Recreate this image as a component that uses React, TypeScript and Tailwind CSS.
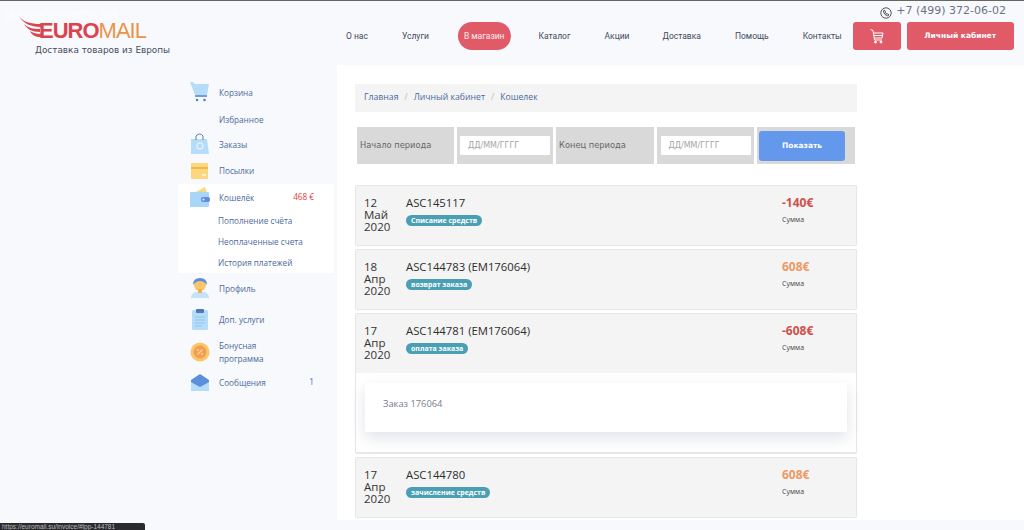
import React from "react";

const dv = "font-['DejaVu_Sans',sans-serif]";
const os = "font-['Open_Sans',sans-serif]";

function Logo() {
  return (
    <div className="relative w-[150px] h-[29px] ml-[18px]">
      <svg className="absolute left-0 top-0" width="30" height="28" viewBox="0 0 30 28">
        <path d="M1 1 C5 7 12 9 23 9 L23 12 C12 12 5 8 1 1Z" fill="#d9444e" />
        <path d="M6 9 C10 13 15 14 22 14 L22 17 C14 17 9 14 6 9Z" fill="#d9444e" />
        <path d="M12 16 C15 18 18 19 23 19 L23 22 C17 22 14 20 12 16Z" fill="#d9444e" />
      </svg>
      <div className="absolute left-[21px] top-[4px] flex items-baseline text-[22px] leading-[24px] tracking-[-1px] font-['Liberation_Sans',sans-serif]">
        <span className="font-bold text-[#d9444e]">EURO</span>
        <span className="text-[#e8954a]">MAIL</span>
      </div>
    </div>
  );
}

function NavLink({ children, active }: { children: React.ReactNode; active?: boolean }) {
  return active ? (
    <span className="h-[28px] px-[6px] flex items-center rounded-[14px] bg-[#e05a68] text-white/90">{children}</span>
  ) : (
    <span className="text-[#3f4a5c]">{children}</span>
  );
}

function CartIcon({ color = "#fff", size = 16 }: { color?: string; size?: number }) {
  return (
    <svg width={size} height={size} viewBox="0 0 16 16" fill="none" stroke={color} strokeWidth="1">
      <path d="M1.5 1.5 L4 2.5 L5.5 12 H13" />
      <path d="M4.5 5 H14 L13 10 H5.2" />
      <path d="M5 7.5 H13.5" />
      <circle cx="6.5" cy="14" r="1" fill={color} />
      <circle cx="12" cy="14" r="1" fill={color} />
    </svg>
  );
}

const I = ({ children }: { children: React.ReactNode }) => (
  <svg width="20" height="22" viewBox="0 0 20 22" className="shrink-0">{children}</svg>
);

const icons: Record<string, React.ReactNode> = {
  cart: (
    <I>
      <path d="M0 1 H3 L5 3 H19 L17 14 H5Z" fill="#b5dcf8" />
      <path d="M5 14 H17 V16 H5Z" fill="#6d9fdc" />
      <circle cx="7" cy="19" r="1.3" fill="#5a7fb5" />
      <circle cx="14.5" cy="19" r="1.3" fill="#5a7fb5" />
    </I>
  ),
  bag: (
    <I>
      <path d="M1 6 H17 L19 21 H1Z" fill="#b5dcf8" />
      <path d="M6 7 V3 Q10 -1 13 3 V7" fill="none" stroke="#5f7fa8" strokeWidth="1" />
      <circle cx="10" cy="13" r="3" fill="none" stroke="#e2f2fd" strokeWidth="1.3" />
    </I>
  ),
  box: (
    <I>
      <rect x="1" y="3" width="17" height="16" rx="1" fill="#fcd77f" />
      <rect x="1" y="7" width="17" height="2" fill="#f0b74f" />
      <rect x="12" y="14" width="4" height="2" fill="#fff3cf" />
    </I>
  ),
  wallet: (
    <I>
      <path d="M2 8 L15 1 L17 7Z" fill="#fcd77f" />
      <rect x="0" y="6" width="19" height="15" rx="1" fill="#a9d5f7" />
      <rect x="11" y="11" width="9" height="5" rx="2" fill="#5f8fdc" />
      <circle cx="13.5" cy="13.5" r="1" fill="#e2f2fd" />
    </I>
  ),
  user: (
    <I>
      <path d="M1 21 Q1 16 6 15 H14 Q19 16 19 21Z" fill="#c4e3f9" />
      <circle cx="10" cy="8" r="6" fill="#fbc56b" />
      <path d="M3 8 Q3 1 10 1 Q17 1 17 8 Q14 4 10 4 Q6 4 3 8Z" fill="#5b8fdb" />
      <rect x="8" y="12" width="4" height="4" fill="#f5ad4f" />
    </I>
  ),
  clip: (
    <I>
      <rect x="2" y="2" width="16" height="20" rx="1.5" fill="#b5dcf8" />
      <rect x="6" y="1" width="8" height="4" rx="1" fill="#4f78b8" />
      <path d="M5 9 H15 M5 12 H15 M5 15 H15 M5 18 H12" stroke="#93c4ec" strokeWidth="1" />
    </I>
  ),
  coin: (
    <I>
      <circle cx="10" cy="11" r="9.5" fill="#fbc56b" />
      <circle cx="10" cy="11" r="6.5" fill="#ef9f4f" />
      <path d="M7.5 13.5 L12.5 8.5" stroke="#fbd79a" strokeWidth="1.2" />
      <circle cx="8" cy="9" r="1" fill="#fbd79a" />
      <circle cx="12" cy="13" r="1" fill="#fbd79a" />
    </I>
  ),
  mail: (
    <I>
      <path d="M1 9 L10 3 L19 9 V19 H1Z" fill="#5b8fdb" />
      <path d="M1 11 L10 16 L19 11 V20 H1Z" fill="#b5dcf8" />
    </I>
  ),
};

function SideItem({
  icon,
  label,
  right,
  rightClass,
  className,
}: {
  icon?: string;
  label: React.ReactNode;
  right?: string;
  rightClass?: string;
  className?: string;
}) {
  return (
    <div className={`flex items-center pl-[12px] ${className ?? ""}`}>
      <div className="w-[29px] shrink-0 flex justify-start">{icon ? icons[icon] : null}</div>
      <div className="flex-1 text-[#4a6a9c] leading-[13px]">{label}</div>
      {right ? <div className={`mr-[20px] ${rightClass}`}>{right}</div> : null}
    </div>
  );
}

function Sidebar() {
  return (
    <aside className={`w-[156px] shrink-0 pt-[15px] text-[8.2px] ${os}`}>
      <SideItem icon="cart" label="Корзина" className="h-[24px]" />
      <SideItem label="Избранное" className="h-[28px] mt-[1px]" />
      <SideItem icon="bag" label="Заказы" className="h-[22px]" />
      <SideItem icon="box" label="Посылки" className="h-[27px] mt-[2px]" />
      <div className="bg-white h-[89px] pt-[1px]">
        <SideItem icon="wallet" label="Кошелёк" right="468 €" rightClass="text-[#e2403c]" className="h-[24px]" />
        <div className="pl-[40px] pt-[1px] text-[#4a6a9c]">
          <div className="h-[22px] flex items-center">Пополнение счёта</div>
          <div className="h-[21px] flex items-center">Неоплаченные счета</div>
          <div className="h-[20px] flex items-center">История платежей</div>
        </div>
      </div>
      <SideItem icon="user" label="Профиль" className="h-[30px]" />
      <SideItem icon="clip" label="Доп. услуги" className="h-[32px]" />
      <SideItem icon="coin" label={<>Бонусная<br />программа</>} className="h-[33px]" />
      <SideItem icon="mail" label="Сообщения" right="1" rightClass="text-[#4a6a9c]" className="h-[28px]" />
    </aside>
  );
}

function Txn({
  d, m, id, tag, amt, neg, children,
}: {
  d: string; m: string; id: string; tag: string; amt: string; neg?: boolean; children?: React.ReactNode;
}) {
  return (
    <div className="mb-[4px] rounded-[2px] border-x border-t border-[#e6e6e6] bg-white shadow-[0_1px_1px_rgba(0,0,0,0.1)]">
      <div className="h-[59px] bg-[#f4f4f4] flex pl-[8px] pt-[11px]">
        <div className="w-[42px] shrink-0 text-[11.5px] leading-[12px] text-[#333]">
          <div>{d}</div>
          <div>{m}</div>
          <div>2020</div>
        </div>
        <div className="flex-1 -mt-[1px]">
          <div className="text-[11.3px] leading-[13px] text-[#2d2d2d]">{id}</div>
          <div className="mt-[6px] block w-fit rounded-[6px] h-[11px] px-[5px] bg-[#4a9fb5] text-white text-[7px] leading-[11px] font-bold">
            {tag}
          </div>
        </div>
        <div className="w-[74px] shrink-0 -mt-[1px]">
          <div className={`text-[12px] leading-[13px] font-bold ${neg ? "text-[#d2504c]" : "text-[#ec9a66]"}`}>{amt}</div>
          <div className="mt-[6px] text-[7px] leading-[10px] text-[#444]">Сумма</div>
        </div>
      </div>
      {children}
    </div>
  );
}

export default function App() {
  return (
    <div className={`relative h-[530px] w-[1024px] overflow-hidden bg-[#f8f9fc] border-t border-[#666] ${dv}`}>
      <div className="absolute left-[4px] top-[3px] text-[13px] text-white/70 font-['Liberation_Sans',sans-serif]">pravovoi-vopros.net</div>

      <header className="h-[64px] flex">
        <div className="w-[323px] shrink-0 pt-[14px]">
          <Logo />
          <div className="ml-[35px] text-[8.9px] leading-[12px] text-[#444c5c]">Доставка товаров из Европы</div>
        </div>
        <div className="flex-1 flex flex-col">
          <div className="h-[21px] flex items-center justify-end pr-[18px] text-[11px] text-[#6c7285]">
            <svg className="mr-[4px] mt-[3px]" width="12" height="12" viewBox="0 0 12 12" fill="none" stroke="#444" strokeWidth="0.9">
              <circle cx="6" cy="6" r="5.2" />
              <path d="M4 3 L3.5 5 Q4.5 8 7.5 8.8 L9 8 L7.8 6.8 L7 7.2 Q5.5 6.5 5 5 L5.5 4.3Z" />
            </svg>
            +7 (499) 372-06-02
          </div>
          <div className="flex items-center h-[28px] text-[8.5px] font-['Roboto',sans-serif]">
            <div className="ml-[23px]"><NavLink>О нас</NavLink></div>
            <div className="ml-[34px]"><NavLink>Услуги</NavLink></div>
            <div className="ml-[29px]"><NavLink active>В магазин</NavLink></div>
            <div className="ml-[28px]"><NavLink>Каталог</NavLink></div>
            <div className="ml-[34px]"><NavLink>Акции</NavLink></div>
            <div className="ml-[33px]"><NavLink>Доставка</NavLink></div>
            <div className="ml-[34px]"><NavLink>Помощь</NavLink></div>
            <div className="ml-[34px]"><NavLink>Контакты</NavLink></div>
            <div className="ml-[11px] h-[28px] w-[48px] rounded-[3px] bg-[#e05a68] flex items-center justify-center"><CartIcon /></div>
            <div className={`ml-[6px] h-[28px] w-[107px] rounded-[3px] bg-[#e05a68] flex items-center justify-center text-white text-[7.5px] font-bold ${dv}`}>Личный кабинет</div>
          </div>
        </div>
      </header>

      <div className="flex h-[455px]">
        <div className="w-[178px] shrink-0" />
        <Sidebar />
        <main className={`ml-[3px] flex-1 bg-white pl-[18px] pt-[19px] ${os}`}>
          <div className="w-[502px]">
            <nav className="h-[28px] bg-[#f4f4f4] flex items-center pl-[9px] text-[8.7px] text-[#4a6a9c]">
              <span>Главная</span>
              <span className="mx-[6px] text-[#bbb]">/</span>
              <span>Личный кабинет</span>
              <span className="mx-[6px] text-[#bbb]">/</span>
              <span>Кошелек</span>
            </nav>
            <div className={`mt-[15px] ml-[2px] h-[37px] flex gap-[3px] text-[8.3px] text-[#666] ${dv}`}>
              <div className="w-[97px] bg-[#d9d9d9] flex items-center pl-[3px]">Начало периода</div>
              <div className="w-[96px] bg-[#d9d9d9] flex items-center justify-center">
                <div className="w-[90px] h-[19px] bg-white rounded-[1px] pl-[8px] flex items-center text-[#a5a5a5] text-[8px]">ДД/ММ/ГГГГ</div>
              </div>
              <div className="w-[98px] bg-[#d9d9d9] flex items-center pl-[3px]">Конец периода</div>
              <div className="w-[97px] bg-[#d9d9d9] flex items-center justify-center">
                <div className="w-[90px] h-[19px] bg-white rounded-[1px] pl-[8px] flex items-center text-[#a5a5a5] text-[8px]">ДД/ММ/ГГГГ</div>
              </div>
              <div className="w-[98px] bg-[#d9d9d9] flex items-center pl-[2px]">
                <div className="w-[86px] h-[30px] rounded-[3px] bg-[#6498ec] flex items-center justify-center text-white font-bold text-[7.5px]">Показать</div>
              </div>
            </div>
            <div className="mt-[21px]">
              <Txn d="12" m="Май" id="ASC145117" tag="Списание средств" amt="-140€" neg />
              <Txn d="18" m="Апр" id="ASC144783 (EM176064)" tag="возврат заказа" amt="608€" />
              <Txn d="17" m="Апр" id="ASC144781 (EM176064)" tag="оплата заказа" amt="-608€" neg>
                <div className="h-[80px] pl-[9px] pr-[9px] pt-[10px] border-b border-[#e6e6e6]">
                  <div className="h-[49px] bg-white shadow-[0_6px_14px_rgba(40,60,100,0.14)] pl-[18px] pt-[14px] text-[9.3px] text-[#777c8c]">Заказ 176064</div>
                </div>
              </Txn>
              <Txn d="17" m="Апр" id="ASC144780" tag="зачисление средств" amt="608€" />
            </div>
          </div>
        </main>
      </div>

      <div className="absolute left-0 bottom-0 w-[145px] h-[7px] rounded-tr-[2px] bg-[#2b2b2f] text-[6.5px] leading-[7px] text-[#bbb] pl-[2px] overflow-hidden whitespace-nowrap font-['Liberation_Sans',sans-serif]">
        https://euromail.su/invoice/#lpp-144781
      </div>
    </div>
  );
}
